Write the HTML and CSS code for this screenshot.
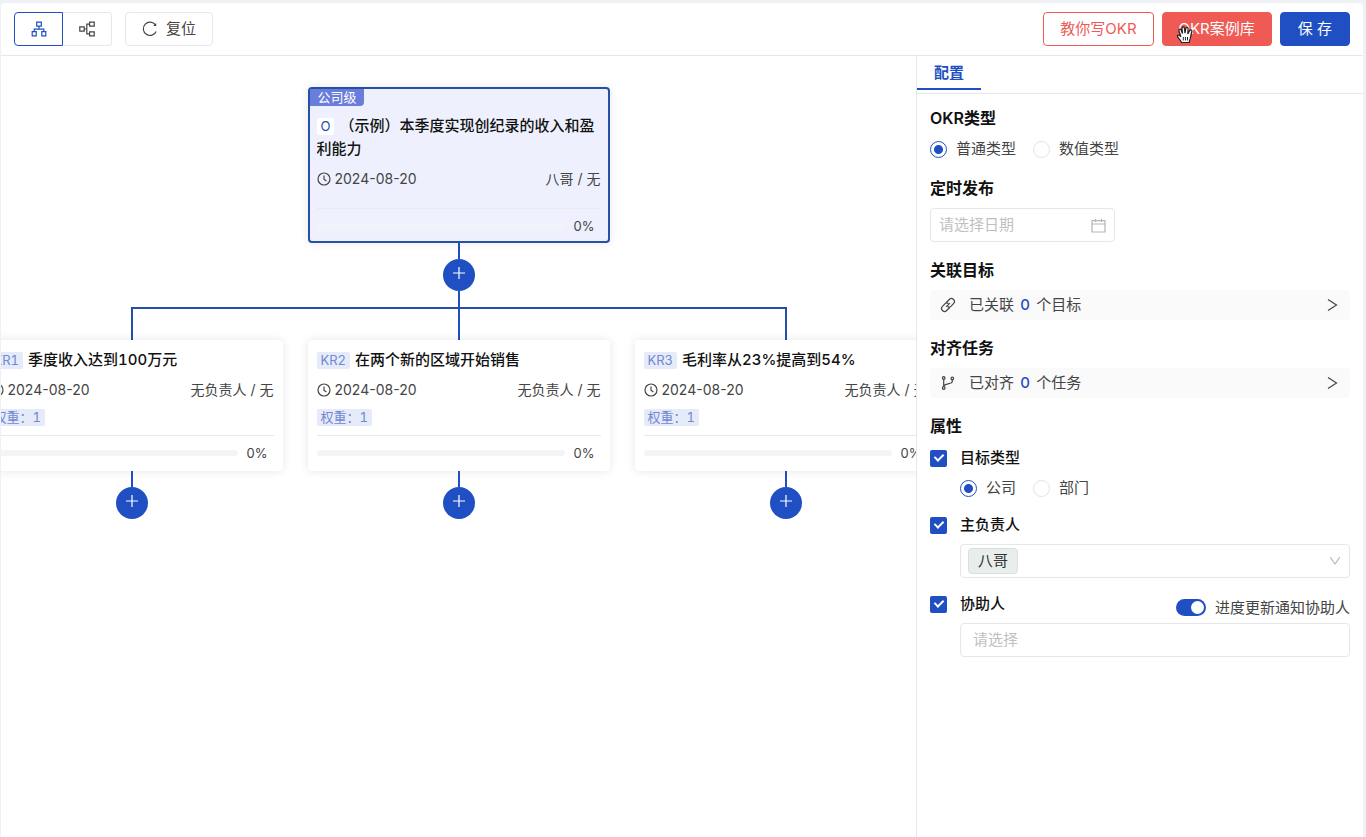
FILE: index.html
```html
<!DOCTYPE html>
<html lang="zh-CN">
<head>
<meta charset="utf-8">
<meta name="viewport" content="width=device-width, initial-scale=1">
<title>OKR</title>
<link rel="stylesheet" href="styles.css">
</head>
<body>
<svg class="sprite" aria-hidden="true">
  <symbol id="clock" viewBox="0 0 14 14"><circle cx="7" cy="7" r="6"/><path d="M7 3.4V7.3L9.4 9"/></symbol>
  <symbol id="plus" viewBox="0 0 14 14"><path d="M7 1v12M1 7h12"/></symbol>
  <symbol id="chevron" viewBox="0 0 12 14"><path d="M2 1.500l8.500 5.500L2 12.500"/></symbol>
</svg>
<div class="app">
  <header class="toolbar">
    <div class="views">
      <button class="btn view view-active" type="button" aria-label="纵向视图">
        <svg class="icon" width="16" height="16" viewBox="0 0 16 16"><path d="M5.7 1.2h4.6v4H5.7zM1.2 10.6h4v4.2h-4zM10.8 10.6h4v4.2h-4zM8 5.2v2.9M3.2 10.6V8.1h9.6v2.5"/></svg>
      </button>
      <button class="btn view" type="button" aria-label="横向视图">
        <svg class="icon" width="16" height="16" viewBox="0 0 16 16"><path d="M.8 5.8h4.4v4.4H.8zM10.6 1.2h4.6v4h-4.6zM10.6 10.8h4.6v4h-4.6zM5.2 8h2.6M10.6 3.2H7.8v9.6h2.8"/></svg>
      </button>
    </div>
    <button class="btn reset" type="button">
      <svg class="icon" width="16" height="16" viewBox="0 0 16 16"><path d="M13.5 3.9A6.7 6.7 0 1 0 14.2 10.4"/><path d="M14.2 1.9v3h-3z" fill="currentColor" stroke="none"/></svg>
      复位
    </button>
    <div class="actions">
      <button class="btn btn-outline" type="button">教你写OKR</button>
      <button class="btn btn-red" type="button">OKR案例库
        <svg class="pointer" width="18" height="20" viewBox="0 0 18 20"><path d="M5.600 17.500c-.8-2-2.400-3.700-3.900-5.600-1-1.300.5-2.400 1.700-1.500l1.500 1.400-2-6c-.5-1.600 1.600-2.300 2.200-.8l1.400 3.600-.5-5.300c-.1-1.700 2.200-1.900 2.400-.2l.6 5 .8-4.600c.3-1.600 2.500-1.300 2.300.4L11.800 9l1.900-3.400c.9-1.400 2.600-.5 2.100 1.100-.8 2.500-1 4-1.400 6.300-.3 1.600-1.100 2.300-1.100 4.500z" fill="#fff" stroke="#222" stroke-width="1.200"/><path d="M7.300 12v3.500M9.400 12v3.500M11.500 12v3.500" stroke="#222" fill="none"/></svg>
      </button>
      <button class="btn btn-blue" type="button">保 存</button>
    </div>
  </header>
  <div class="workspace">
    <main class="canvas">
      <article class="card card-root">
        <span class="level">公司级</span>
        <h2 class="title"><span class="badge badge-o">O</span>（示例）本季度实现创纪录的收入和盈利能力</h2>
        <div class="meta"><svg class="icon" width="14" height="14"><use href="#clock"/></svg><time>2024-08-20</time><span class="owner">八哥 / 无</span></div>
        <div class="progress"><span class="track"></span>0%</div>
      </article>
      <div class="stem"></div>
      <button class="add" type="button" aria-label="添加"><svg class="icon" width="14" height="14"><use href="#plus"/></svg></button>
      <div class="stem"></div>
      <div class="branches">
        <div class="fork"><div class="fork-mid"></div></div>
        <div class="children">
          <div class="branch">
            <article class="card">
              <h2 class="title"><span class="badge">KR1</span>季度收入达到100万元</h2>
              <div class="meta"><svg class="icon" width="14" height="14"><use href="#clock"/></svg><time>2024-08-20</time><span class="owner">无负责人 / 无</span></div>
              <span class="badge weight">权重：1</span>
              <div class="progress"><span class="track"></span>0%</div>
            </article>
            <div class="stem"></div>
            <button class="add" type="button" aria-label="添加"><svg class="icon" width="14" height="14"><use href="#plus"/></svg></button>
          </div>
          <div class="branch">
            <article class="card">
              <h2 class="title"><span class="badge">KR2</span>在两个新的区域开始销售</h2>
              <div class="meta"><svg class="icon" width="14" height="14"><use href="#clock"/></svg><time>2024-08-20</time><span class="owner">无负责人 / 无</span></div>
              <span class="badge weight">权重：1</span>
              <div class="progress"><span class="track"></span>0%</div>
            </article>
            <div class="stem"></div>
            <button class="add" type="button" aria-label="添加"><svg class="icon" width="14" height="14"><use href="#plus"/></svg></button>
          </div>
          <div class="branch">
            <article class="card">
              <h2 class="title"><span class="badge">KR3</span>毛利率从23%提高到54%</h2>
              <div class="meta"><svg class="icon" width="14" height="14"><use href="#clock"/></svg><time>2024-08-20</time><span class="owner">无负责人 / 无</span></div>
              <span class="badge weight">权重：1</span>
              <div class="progress"><span class="track"></span>0%</div>
            </article>
            <div class="stem"></div>
            <button class="add" type="button" aria-label="添加"><svg class="icon" width="14" height="14"><use href="#plus"/></svg></button>
          </div>
        </div>
      </div>
    </main>
    <aside class="side">
      <div class="tabs" role="tablist"><button class="tab" type="button" role="tab" aria-selected="true">配置</button></div>
      <form class="settings">
        <section class="section">
          <h3 class="heading">OKR类型</h3>
          <div class="radios">
            <label class="choice"><input class="radio" type="radio" name="kind" checked>普通类型</label>
            <label class="choice"><input class="radio" type="radio" name="kind">数值类型</label>
          </div>
        </section>
        <section class="section">
          <h3 class="heading"><label for="date">定时发布</label></h3>
          <div class="field date">
            <input class="date-input" id="date" type="text" placeholder="请选择日期">
            <svg class="icon" width="15" height="15" viewBox="0 0 15 15"><path d="M1 2.700h13v11.300H1zM1 6h13M4.500 .7v3.300M10.500 .7v3.300"/></svg>
          </div>
        </section>
        <section class="section">
          <h3 class="heading">关联目标</h3>
          <button class="link-row" type="button">
            <svg class="icon" width="16" height="16" viewBox="0 0 16 16"><path d="M6.300 5.500l3-3a2.900 2.900 0 0 1 4.200 4.200l-2.600 2.600c-1 1-2.300 1-3.300.3M9.700 10.500l-3 3a2.900 2.900 0 0 1-4.200-4.200l2.600-2.600c1-1 2.300-1 3.300-.3M6.200 9.800l3.600-3.600"/></svg>
            <span>已关联 <b class="count">0</b> 个目标</span>
            <svg class="icon arrow" width="12" height="14"><use href="#chevron"/></svg>
          </button>
        </section>
        <section class="section">
          <h3 class="heading">对齐任务</h3>
          <button class="link-row" type="button">
            <svg class="icon" width="16" height="16" viewBox="0 0 16 16"><circle cx="3.700" cy="3" r="1.300"/><circle cx="3.700" cy="13" r="1.300"/><circle cx="12.300" cy="3.500" r="1.300"/><path d="M3.700 4.300v7.400M12.300 4.800v1.400c0 1-.5 1.500-1.400 1.800L5.600 9.600c-1.200.4-1.900 1-1.900 2.100"/></svg>
            <span>已对齐 <b class="count">0</b> 个任务</span>
            <svg class="icon arrow" width="12" height="14"><use href="#chevron"/></svg>
          </button>
        </section>
        <section class="section">
          <h3 class="heading">属性</h3>
          <div class="attributes">
            <div class="attribute">
              <label class="attr-label"><input class="check" type="checkbox" checked>目标类型</label>
              <div class="radios indent">
                <label class="choice"><input class="radio" type="radio" name="scope" checked>公司</label>
                <label class="choice"><input class="radio" type="radio" name="scope">部门</label>
              </div>
            </div>
            <div class="attribute">
              <label class="attr-label"><input class="check" type="checkbox" checked>主负责人</label>
              <div class="field indent owner-field">
                <span class="tag">八哥</span>
                <select class="select" aria-label="主负责人"><option></option></select>
                <svg class="icon" width="12" height="12" viewBox="0 0 12 12"><path d="M1.200 2.200L6 9l4.800-6.800"/></svg>
              </div>
            </div>
            <div class="attribute">
              <div class="helper-row">
                <label class="attr-label"><input class="check" type="checkbox" checked>协助人</label>
                <label class="notify"><input class="switch" type="checkbox" role="switch" checked>进度更新通知协助人</label>
              </div>
              <div class="field indent helper-field">
                <select class="select" aria-label="协助人"><option>请选择</option></select>
              </div>
            </div>
          </div>
        </section>
      </form>
    </aside>
  </div>
</div>
</body>
</html>
```
FILE: styles.css
```css
:root {
  --blue: #1f4fc2;
  --line: #2450a8;
  --red: #ef5a55;
  --text: #444;
  --border: #e6e7ea;
}
* { box-sizing: border-box; }
body {
  margin: 0;
  background: #f0f1f5;
  color: var(--text);
  font: 15px/22px Inter, "Noto Sans CJK SC", sans-serif;
}
button, input, select { font: inherit; color: inherit; margin: 0; padding: 0; }
h2, h3 { margin: 0; }
.sprite { position: absolute; width: 0; height: 0; }
.icon { flex: none; fill: none; stroke: currentColor; stroke-width: 1.2; }

.app {
  display: flex;
  flex-direction: column;
  min-height: 100vh;
  padding: 3px 3px 0 1px;
}
.toolbar {
  display: flex;
  align-items: center;
  gap: 13px;
  padding: 9px 13px;
  background: #fff;
  border-bottom: 1px solid var(--border);
  border-radius: 4px 4px 0 0;
}
.btn {
  display: flex;
  align-items: center;
  gap: 8px;
  height: 34px;
  padding: 0 16px;
  border: 1px solid var(--border);
  border-radius: 4px;
  background: #fff;
}
.views { display: flex; }
.view {
  justify-content: center;
  width: 49px;
  padding: 0;
  border-left: 0;
  border-radius: 0 4px 4px 0;
}
.view-active { border: 1px solid var(--blue); border-radius: 4px 0 0 4px; color: var(--blue); }
.actions { display: flex; gap: 8px; margin-left: auto; }
.btn-outline { border-color: var(--red); color: var(--red); }
.btn-red { position: relative; border-color: var(--red); background: var(--red); color: #fff; }
.btn-blue { padding: 0 17px; border-color: var(--blue); background: var(--blue); color: #fff; }
.pointer { position: absolute; left: 13px; top: 12px; }

.workspace { display: flex; flex: 1; background: #fff; }
.canvas {
  display: flex;
  flex: 1;
  flex-direction: column;
  align-items: center;
  min-width: 0;
  padding-top: 31px;
  overflow: hidden;
}
.card {
  display: flex;
  flex-direction: column;
  width: 302px;
  padding: 8px 9px 7px;
  border-radius: 4px;
  background: #fff;
  box-shadow: 0 0 10px rgba(0, 0, 0, .1);
}
.card-root {
  padding: 0 7px 4px;
  border: 2px solid var(--line);
  background: #eef1fd;
}
.level {
  align-self: flex-start;
  margin-left: -7px;
  margin-bottom: 8px;
  padding: 0 7px 0 8px;
  border-radius: 0 0 4px;
  background: #6a7ddb;
  color: #fff;
  font-size: 13px;
  line-height: 17px;
}
.title {
  color: #111;
  font-size: 15px;
  font-weight: 500;
  line-height: 23px;
  font-variant-numeric: tabular-nums;
}
.badge {
  display: inline-block;
  margin-right: 5px;
  padding: 0 4px;
  border-radius: 2px;
  background: #e6ebfa;
  color: #7188d2;
  font-size: 13px;
  font-weight: 400;
  line-height: 17px;
  font-variant-numeric: tabular-nums;
}
.badge-o { background: #fff; color: var(--line); }
.meta {
  display: flex;
  align-items: center;
  gap: 4px;
  margin-top: 8px;
  font-size: 14px;
}
.card-root .meta { margin-bottom: 9px; }
.owner { margin-left: auto; white-space: nowrap; }
.weight { align-self: flex-start; margin-top: 8px; }
.progress {
  display: flex;
  align-items: center;
  gap: 9px;
  margin-top: 9px;
  padding: 6px 6px 0 0;
  border-top: 1px solid #e9e9eb;
  font-size: 13px;
}
.track { flex: 1; height: 6px; border-radius: 3px; background: #f4f4f4; }
.card-root .track { background: #f1f3fa; }
.stem { width: 2px; height: 16px; background: var(--blue); }
.add {
  display: flex;
  justify-content: center;
  width: 32px;
  height: 32px;
  padding-top: 7px;
  border: 0;
  border-radius: 50%;
  background: var(--blue);
  color: #fff;
}
.add .icon { margin-bottom: 4px; }
.fork {
  display: flex;
  justify-content: center;
  height: 33px;
  margin: 0 150px;
  border: 2px solid var(--line);
  border-bottom: 0;
}
.fork-mid { width: 2px; background: var(--blue); }
.children { display: flex; gap: 25px; }
.branch { display: flex; flex-direction: column; align-items: center; }

.side { width: 447px; border-left: 1px solid var(--border); }
.tabs { height: 38px; border-bottom: 1px solid var(--border); }
.tab {
  height: 34px;
  padding: 2px 17px 0;
  border: 0;
  border-bottom: 2px solid var(--blue);
  background: none;
  color: var(--blue);
  font-weight: 600;
}
.settings { display: flex; flex-direction: column; gap: 16px; padding: 12px 13px; }
.section { display: flex; flex-direction: column; gap: 8px; }
.heading { color: #111; font-size: 16px; font-weight: 600; line-height: 24px; }
.radios { display: flex; gap: 17px; }
.choice { display: flex; align-items: center; gap: 9px; }
.radio {
  appearance: none;
  width: 17px;
  height: 17px;
  border: 1px solid #e2e3e6;
  border-radius: 50%;
}
.radio:checked {
  border-color: var(--blue);
  background: radial-gradient(circle, var(--blue) 4px, transparent 5px);
}
.field {
  display: flex;
  align-items: center;
  height: 34px;
  border: 1px solid var(--border);
  border-radius: 4px;
}
.date { width: 185px; padding: 0 8px; color: #b5b5b5; }
.date-input { flex: 1; min-width: 0; border: 0; background: none; }
.date-input::placeholder { color: #bfbfbf; }
.link-row {
  display: flex;
  align-items: center;
  gap: 13px;
  height: 30px;
  padding: 0 12px 0 10px;
  border: 0;
  border-radius: 4px;
  background: #fafafa;
}
.count { margin: 0 2px; color: var(--blue); font-weight: 500; }
.arrow { margin-left: auto; }
.attributes { display: flex; flex-direction: column; gap: 14px; }
.attribute { display: flex; flex-direction: column; gap: 7px; }
.attr-label {
  display: flex;
  align-items: center;
  gap: 13px;
  height: 24px;
  color: #111;
  font-weight: 500;
}
.check {
  appearance: none;
  display: grid;
  place-items: center;
  width: 17px;
  height: 17px;
  border-radius: 2px;
  background: var(--blue);
}
.check::before {
  content: "";
  width: 4px;
  height: 7px;
  margin-bottom: 3px;
  border: solid #fff;
  border-width: 0 2px 2px 0;
  rotate: 45deg;
}
.indent { margin-left: 30px; }
.owner-field { padding: 0 8px 0 7px; color: #bbb; }
.tag {
  padding: 0 9px;
  border: 1px solid #dadfdc;
  border-radius: 4px;
  background: #e8eeeb;
  color: #333;
  line-height: 24px;
}
.select { appearance: none; flex: 1; min-width: 0; border: 0; background: none; }
.helper-row { display: flex; justify-content: space-between; }
.notify { display: flex; align-items: center; gap: 9px; padding-top: 7px; height: 24px; }
.switch {
  appearance: none;
  display: flex;
  justify-content: flex-end;
  width: 30px;
  height: 17px;
  padding: 2px;
  border-radius: 9px;
  background: var(--blue);
}
.switch::before { content: ""; width: 13px; border-radius: 50%; background: #fff; }
.helper-field { padding: 0 12px; color: #bfbfbf; }
```
